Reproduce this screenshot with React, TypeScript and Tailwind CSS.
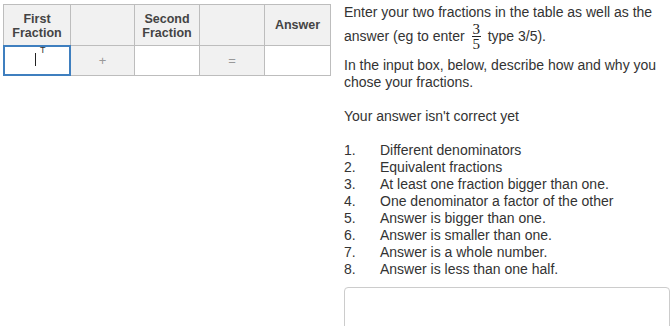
import React from "react";

const items = [
  "Different denominators",
  "Equivalent fractions",
  "At least one fraction bigger than one.",
  "One denominator a factor of the other",
  "Answer is bigger than one.",
  "Answer is smaller than one.",
  "Answer is a whole number.",
  "Answer is less than one half.",
];

export default function App() {
  return (
    <div
      className="flex w-[672px] h-[326px] overflow-hidden bg-white text-[#333]"
      style={{ fontFamily: '"Liberation Sans", Arial, sans-serif' }}
    >
      <div className="pl-[3px] pt-[4px] w-[340px] shrink-0">
        <table className="border-collapse text-[12.5px] font-bold text-[#444] leading-[14px]">
          <tbody>
            <tr className="h-[41px]">
              <th className="w-[67px] pt-[2px] border border-[#bdbdbd] bg-[#f1f1f1] font-bold">First<br />Fraction</th>
              <th className="w-[64px] border border-[#bdbdbd] bg-[#f1f1f1]"></th>
              <th className="w-[65px] pt-[2px] border border-[#bdbdbd] bg-[#f1f1f1] font-bold">Second<br />Fraction</th>
              <th className="w-[65px] border border-[#bdbdbd] bg-[#f1f1f1]"></th>
              <th className="w-[66px] border border-[#bdbdbd] bg-[#f1f1f1] font-bold">Answer</th>
            </tr>
            <tr className="h-[30px]">
              <td className="relative p-0 border border-[#bdbdbd] bg-white">
                <div className="absolute inset-[-1px] border-2 border-[#3f7fbf]"></div>
                <div className="absolute left-[31px] top-[7px] w-px h-[13px] bg-[#222]"></div>
                <div className="absolute left-[36px] top-0 text-[9px] leading-none text-[#333] font-normal">T</div>
              </td>
              <td className="border border-[#bdbdbd] bg-[#f1f1f1] text-center font-normal text-[13px] text-[#999]">+</td>
              <td className="border border-[#bdbdbd] bg-white"></td>
              <td className="border border-[#bdbdbd] bg-[#f1f1f1] text-center font-normal text-[13px] text-[#999]">=</td>
              <td className="border border-[#bdbdbd] bg-white"></td>
            </tr>
          </tbody>
        </table>
      </div>
      <div className="pl-[4px] pt-[4px] text-[14px] leading-[17px] flex-1">
        <p>Enter your two fractions in the table as well as the</p>
        <p className="flex items-center h-[30px]">
          <span>answer (eg to enter</span>
          <span
            className="inline-flex flex-col items-center mx-[7px] text-[15px] leading-[12px] text-[#222]"
            style={{ fontFamily: '"Liberation Serif", serif' }}
          >
            <span>3</span>
            <span className="w-[9px] h-px bg-[#222] my-[1px]"></span>
            <span>5</span>
          </span>
          <span>type 3/5).</span>
        </p>
        <p className="mt-[6px]">In the input box, below, describe how and why you<br />chose your fractions.</p>
        <p className="mt-[17px]">Your answer isn't correct yet</p>
        <ol className="mt-[17px]">
          {items.map((t, i) => (
            <li key={i} className="flex">
              <span className="w-[36px]">{i + 1}.</span>
              <span>{t}</span>
            </li>
          ))}
        </ol>
        <div className="mt-[9px] mr-[2px] h-[60px] border border-[#ccc] rounded-[4px] bg-white"></div>
      </div>
    </div>
  );
}
